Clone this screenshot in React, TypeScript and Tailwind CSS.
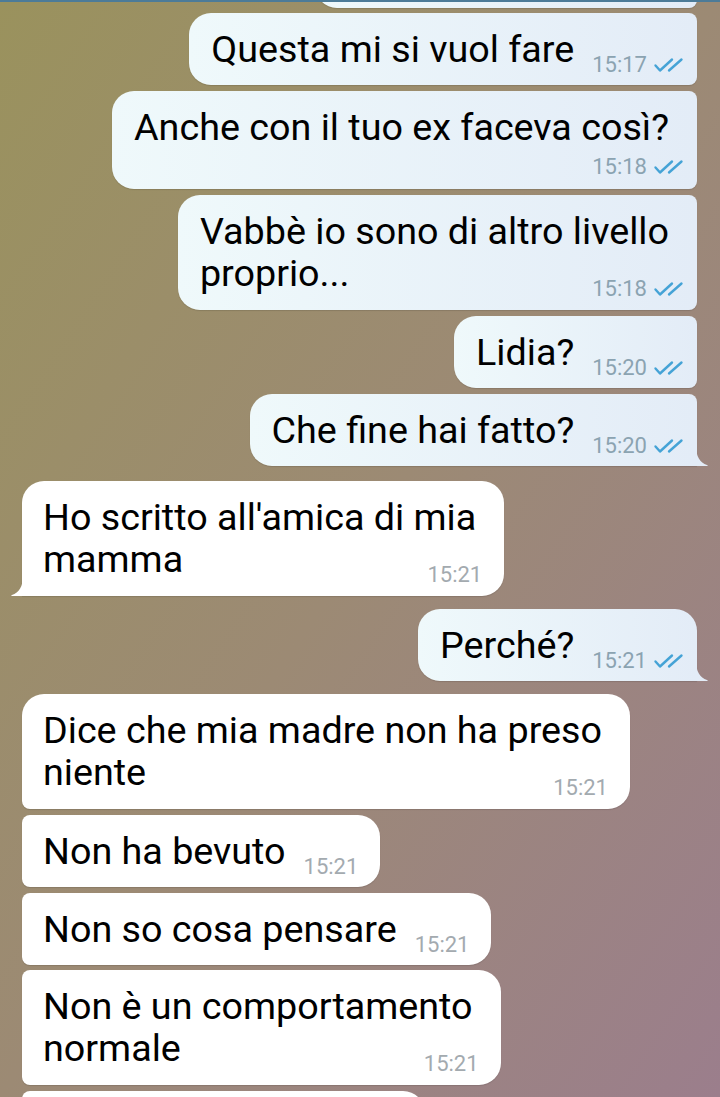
import React from "react";

type Msg = {
  out: boolean;
  lines: string[];
  time: string;
  mode: "inline" | "below";
  mt: string;
  radius: string;
  tail?: boolean;
};

const OUT_MID = "rounded-tl-[22px] rounded-bl-[22px] rounded-tr-[8px] rounded-br-[8px]";
const IN_MID = "rounded-tl-[8px] rounded-bl-[8px] rounded-tr-[22px] rounded-br-[22px]";

const msgs: Msg[] = [
  { out: true, lines: ["Questa mi si vuol fare"], time: "15:17", mode: "inline", mt: "mt-[5px]", radius: OUT_MID },
  { out: true, lines: ["Anche con il tuo ex faceva così?"], time: "15:18", mode: "below", mt: "mt-[6px]", radius: OUT_MID },
  { out: true, lines: ["Vabbè io sono di altro livello", "proprio..."], time: "15:18", mode: "inline", mt: "mt-[6px]", radius: OUT_MID },
  { out: true, lines: ["Lidia?"], time: "15:20", mode: "inline", mt: "mt-[6px]", radius: OUT_MID },
  { out: true, lines: ["Che fine hai fatto?"], time: "15:20", mode: "inline", mt: "mt-[6px]", radius: "rounded-tl-[22px] rounded-bl-[22px] rounded-tr-[8px] rounded-br-none", tail: true },
  { out: false, lines: ["Ho scritto all'amica di mia", "mamma"], time: "15:21", mode: "inline", mt: "mt-[15px]", radius: "rounded-tl-[22px] rounded-tr-[22px] rounded-br-[22px] rounded-bl-none", tail: true },
  { out: true, lines: ["Perché?"], time: "15:21", mode: "inline", mt: "mt-[13px]", radius: "rounded-tl-[22px] rounded-bl-[22px] rounded-tr-[22px] rounded-br-none", tail: true },
  { out: false, lines: ["Dice che mia madre non ha preso", "niente"], time: "15:21", mode: "inline", mt: "mt-[13px]", radius: "rounded-tl-[22px] rounded-tr-[22px] rounded-br-[22px] rounded-bl-[8px]" },
  { out: false, lines: ["Non ha bevuto"], time: "15:21", mode: "inline", mt: "mt-[6px]", radius: IN_MID },
  { out: false, lines: ["Non so cosa pensare"], time: "15:21", mode: "inline", mt: "mt-[6px]", radius: IN_MID },
  { out: false, lines: ["Non è un comportamento", "normale"], time: "15:21", mode: "inline", mt: "mt-[5px]", radius: IN_MID },
];

function Checks() {
  return (
    <svg width="32" height="16" viewBox="0 0 32 16" fill="none" className="shrink-0">
      <path d="M2.5 8.5 L7 13.5 L19 2.5" stroke="#45a3d6" strokeWidth="2.4" strokeLinecap="round" strokeLinejoin="round" />
      <path d="M16 13.5 L28.5 2.5" stroke="#45a3d6" strokeWidth="2.4" strokeLinecap="round" />
    </svg>
  );
}

function Meta({ m, sink }: { m: Msg; sink: boolean }) {
  return (
    <div className={`flex items-center shrink-0 ${sink ? "mb-[-8px]" : ""}`}>
      <span className={`text-[22px] leading-[26px] ${m.out ? "text-[#8ba3b1]" : "text-[#a3aaaf]"}`}>{m.time}</span>
      {m.out && <span className="ml-[6px] flex items-center"><Checks /></span>}
    </div>
  );
}

function Bubble({ m }: { m: Msg }) {
  const last = m.lines.length - 1;
  const double = m.lines.length > 1;
  const bg = m.out ? "bg-linear-to-r from-[#eff9fb] to-[#e3ecf7]" : "bg-white";
  const pad = m.out ? "pl-[22px] pr-[12px]" : "pl-[21px] pr-[22px]";
  const linePad = m.out ? "pr-[16px]" : "pr-[6px]";
  const vpad = m.mode === "below" ? "pt-[15px] pb-[9px]" : double ? "pt-[15px] pb-[16px]" : "pt-[15px] pb-[15px]";
  return (
    <div className={`relative ${m.out ? "self-end" : "self-start"} ${m.mt}`}>
      <div className={`${bg} ${m.radius} ${pad} ${vpad} shadow-[0_1px_1px_rgba(0,0,0,0.12)] text-black text-[37.7px] leading-[42px]`}>
        {m.lines.map((l, i) =>
          m.mode === "inline" && i === last ? (
            <div key={i} className="flex items-end whitespace-nowrap">
              <span>{l}</span>
              <div className="ml-auto pl-[18px]">
                <Meta m={m} sink={true} />
              </div>
            </div>
          ) : (
            <div key={i} className={`whitespace-nowrap ${linePad}`}>{l}</div>
          )
        )}
        {m.mode === "below" && (
          <div className="flex justify-end mt-[6px]">
            <Meta m={m} sink={false} />
          </div>
        )}
      </div>
      {m.tail && m.out && (
        <svg className="absolute bottom-0 right-[-11px]" width="12" height="20" viewBox="0 0 12 20">
          <path d="M0 0 C0 10 4 17 11 19 C12.2 19.4 12 20 11 20 L0 20 Z" fill="#e3ecf7" />
        </svg>
      )}
      {m.tail && !m.out && (
        <svg className="absolute bottom-0 left-[-11px]" width="12" height="20" viewBox="0 0 12 20">
          <path d="M12 0 C12 10 8 17 1 19 C-0.2 19.4 0 20 1 20 L12 20 Z" fill="#ffffff" />
        </svg>
      )}
    </div>
  );
}

export default function App() {
  return (
    <div
      className="relative w-[720px] h-[1097px] overflow-hidden bg-linear-to-br from-[#9a925d] via-[#9c8a74] to-[#9b7e8c] flex flex-col pl-[22px] pr-[23px]"
      style={{ fontFamily: "Roboto, 'Noto Sans', sans-serif" }}
    >
      <div className="self-end w-[382px] h-[30px] mt-[-22px] shrink-0 bg-linear-to-r from-[#eff9fb] to-[#e3ecf7] rounded-bl-[22px] rounded-br-[8px] shadow-[0_1px_1px_rgba(0,0,0,0.12)]" />
      {msgs.map((m, i) => (
        <Bubble key={i} m={m} />
      ))}
      <div className="self-start w-[403px] h-[40px] mt-[6px] shrink-0 bg-white rounded-tl-[8px] rounded-tr-[22px]" />
      <div className="absolute top-0 left-0 right-0 h-[2px] bg-[#4c7b98]" />
    </div>
  );
}
